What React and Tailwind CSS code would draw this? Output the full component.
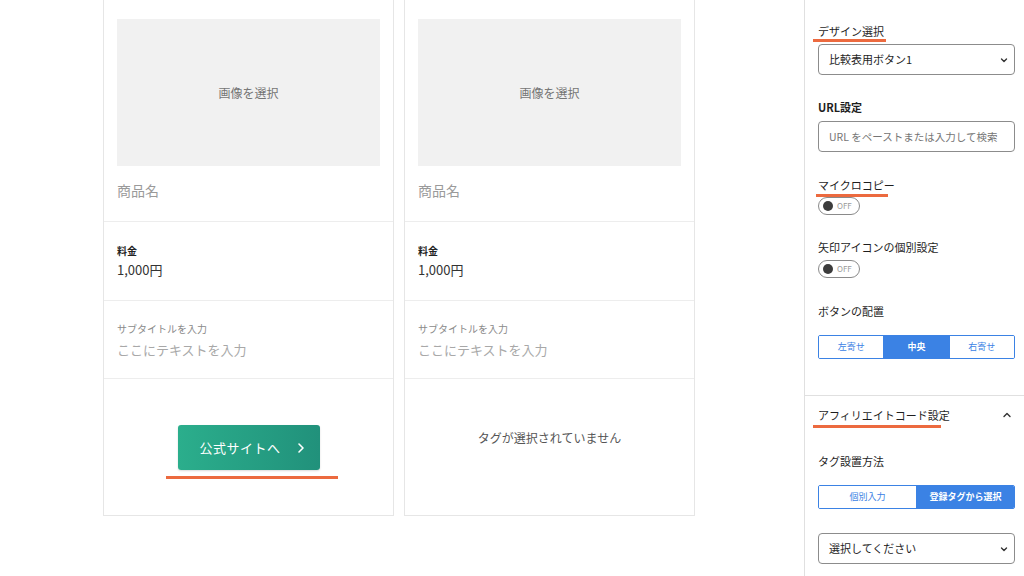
import React from "react";

const font = { fontFamily: '"Noto Sans CJK JP", "Noto Sans", sans-serif' };

const Underline = ({ className }) => (
  <span className={`absolute h-[3px] bg-[#ec6a3f] ${className}`}></span>
);

const Chevron = ({ up }) => (
  <svg width="10" height="10" viewBox="0 0 10 10" className="text-[#333]">
    <path
      d={up ? "M2 6.5 L5 3.5 L8 6.5" : "M2.5 4 L5 6.5 L7.5 4"}
      fill="none"
      stroke="currentColor"
      strokeWidth="1.4"
      strokeLinecap="round"
      strokeLinejoin="round"
    />
  </svg>
);

const Toggle = () => (
  <div className="flex items-center w-[42px] h-[18px] rounded-full border border-[#8a8a8a] pl-[4px] gap-[4px]">
    <span className="w-[10px] h-[10px] rounded-full bg-[#3c3c3c]"></span>
    <span className="text-[8px] leading-none text-[#9a9a9a]">OFF</span>
  </div>
);

const Segmented = ({ items, active }) => (
  <div className="flex h-[24px] w-[197px] rounded-[2px] border border-[#3b82e4] overflow-hidden">
    {items.map((item, i) => (
      <div
        key={item}
        className={`flex-1 flex items-center justify-center text-[9px] ${
          i === active ? "bg-[#3b82e4] text-white font-bold" : "bg-white text-[#3b82e4]"
        } ${i > 0 ? "border-l border-[#3b82e4]" : ""}`}
      >
        {item}
      </div>
    ))}
  </div>
);

const Select = ({ label }) => (
  <div className="flex items-center justify-between w-[197px] h-[31px] rounded-[4px] border border-[#8c8c8c] pl-[10px] pr-[5px]">
    <span className="text-[11px] text-[#1e1e1e]">{label}</span>
    <Chevron />
  </div>
);

const Card = ({ children }) => (
  <div className="w-[291px] border-x border-b border-[#e6e6e6] bg-white">
    <div className="px-[13px] pt-[19px] pb-[21px] border-b border-[#ededed]">
      <div className="h-[147px] bg-[#f1f1f1] flex items-center justify-center text-[12px] text-[#757575]">
        画像を選択
      </div>
      <div className="mt-[14px] leading-[20px] text-[14px] text-[#9a9a9a]">商品名</div>
    </div>
    <div className="px-[13px] pt-[22px] pb-[20px] border-b border-[#ededed]">
      <div className="leading-[14px] text-[10px] font-bold text-[#222]">料金</div>
      <div className="mt-[2px] leading-[20px] text-[13px] text-[#333]">1,000円</div>
    </div>
    <div className="px-[13px] pt-[21px] pb-[18px] border-b border-[#ededed]">
      <div className="leading-[14px] text-[10px] text-[#8a8a8a]">サブタイトルを入力</div>
      <div className="mt-[4px] leading-[20px] text-[13px] text-[#a8a8a8]">ここにテキストを入力</div>
    </div>
    <div className="h-[136px]">{children}</div>
  </div>
);

export default function App() {
  return (
    <div className="flex w-[1024px] h-[576px] bg-white overflow-hidden" style={font}>
      <div className="w-[804px] flex items-start gap-[10px] pl-[103px]">
        <Card>
          <div className="flex flex-col items-center pt-[46px]">
            <div className="flex items-center w-[142px] h-[45px] rounded-[3px] bg-gradient-to-r from-[#2bae8c] to-[#21917b] shadow-[0_1px_2px_rgba(0,0,0,0.15)] pl-[22px]">
              <span className="text-[13px] text-white tracking-[0.5px]">公式サイトへ</span>
              <svg width="8" height="12" viewBox="0 0 8 12" className="ml-[16px]">
                <path d="M2 2 L6 6 L2 10" fill="none" stroke="white" strokeWidth="1.6" strokeLinecap="round" strokeLinejoin="round" />
              </svg>
            </div>
            <div className="mt-[6px] ml-[6px] w-[172px] h-[3px] bg-[#ec6a3f]"></div>
          </div>
        </Card>
        <Card>
          <div className="h-full flex items-center justify-center pb-[18px] text-[12px] text-[#555]">
            タグが選択されていません
          </div>
        </Card>
      </div>
      <div className="flex-1 border-l border-[#e0e0e0]">
        <div className="pl-[13px] pt-[24px] pb-[36px] border-b border-[#e0e0e0]">
          <div className="relative w-fit leading-[14px] text-[11px] text-[#1e1e1e]">
            デザイン選択
            <Underline className="left-[-5px] w-[73px] top-[15px]" />
          </div>
          <div className="mt-[6px]">
            <Select label="比較表用ボタン1" />
          </div>
          <div className="mt-[25px] leading-[14px] text-[11px] font-bold text-[#1e1e1e]">URL設定</div>
          <div className="mt-[7px] flex items-center w-[197px] h-[31px] rounded-[4px] border border-[#8c8c8c] pl-[10px] text-[10.5px] text-[#757575]">
            URL をペーストまたは入力して検索
          </div>
          <div className="relative w-fit mt-[26px] leading-[14px] text-[11px] text-[#1e1e1e]">
            マイクロコピー
            <Underline className="left-[-2px] w-[72px] top-[16px]" />
          </div>
          <div className="mt-[5px]">
            <Toggle />
          </div>
          <div className="mt-[25px] leading-[14px] text-[11px] text-[#1e1e1e]">矢印アイコンの個別設定</div>
          <div className="mt-[6px]">
            <Toggle />
          </div>
          <div className="mt-[26px] leading-[14px] text-[11px] text-[#1e1e1e]">ボタンの配置</div>
          <div className="mt-[17px]">
            <Segmented items={["左寄せ", "中央", "右寄せ"]} active={1} />
          </div>
        </div>
        <div className="pl-[13px] pt-[12px]">
          <div className="flex items-center justify-between pr-[12px]">
            <div className="relative w-fit leading-[14px] text-[11px] text-[#1e1e1e]">
              アフィリエイトコード設定
              <Underline className="left-[-5px] w-[128px] top-[17px]" />
            </div>
            <Chevron up />
          </div>
          <div className="mt-[32px] leading-[14px] text-[11px] text-[#1e1e1e]">タグ設置方法</div>
          <div className="mt-[17px]">
            <Segmented items={["個別入力", "登録タグから選択"]} active={1} />
          </div>
          <div className="mt-[24px]">
            <Select label="選択してください" />
          </div>
        </div>
      </div>
    </div>
  );
}
